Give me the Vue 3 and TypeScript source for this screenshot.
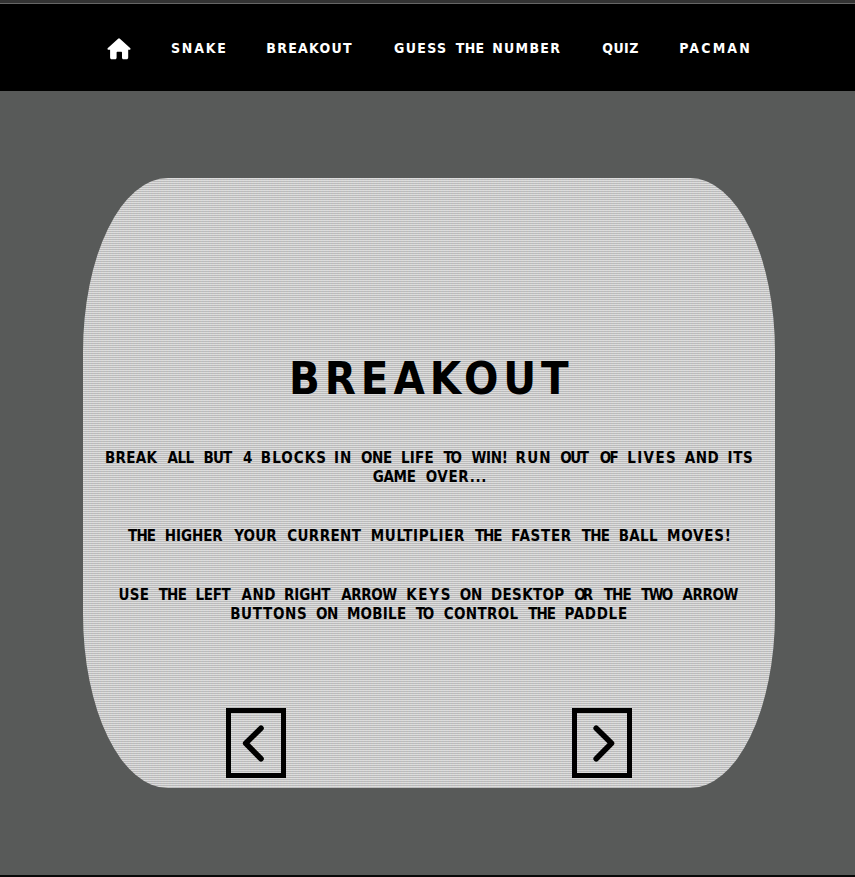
<script setup lang="ts">
interface Word {
  text: string
  width: number
}

const family = '"DejaVu Sans Condensed", "DejaVu Sans", sans-serif'
const ctx = document.createElement('canvas').getContext('2d')!

// Spread the letters of a word evenly over its arcade-font width.
function fit(word: Word, size: number) {
  ctx.font = `bold ${size}px ${family}`
  const m = ctx.measureText(word.text)
  const ink = m.actualBoundingBoxLeft + m.actualBoundingBoxRight
  const gaps = word.text.length - 1
  return {
    width: `${word.width}px`,
    textIndent: `${m.actualBoundingBoxLeft}px`,
    letterSpacing: gaps ? `${((word.width - ink) / gaps).toFixed(3)}px` : '0',
  }
}

function words(source: string): Word[] {
  return source.split(' ').map((part) => {
    const [text, width] = part.split('|')
    return { text, width: Number(width) / 3 }
  })
}

const links: Word[][] = [
  words('SNAKE|163'),
  words('BREAKOUT|254'),
  words('GUESS|156 THE|83 NUMBER|201'),
  words('QUIZ|108'),
  words('PACMAN|207'),
]

const title: Word = { text: 'BREAKOUT', width: 277 }

const paragraphs: Word[][][] = [
  [
    words('BREAK|155 ALL|81 BUT|86 4|27 BLOCKS|190 IN|48 ONE|93 LIFE|95 TO|54 WIN!|106 RUN|101 OUT|89 OF|56 LIVES|140 AND|101 ITS|71'),
    words('GAME|129 OVER...|179'),
  ],
  [words('THE|83 HIGHER|173 YOUR|132 CURRENT|224 MULTIPLIER|280 THE|82 FASTER|179 THE|84 BALL|115 MOVES!|186')],
  [
    words('USE|88 THE|84 LEFT|105 AND|101 RIGHT|139 ARROW|168 KEYS|128 ON|67 DESKTOP|217 OR|59 THE|83 TWO|94 ARROW|168'),
    words('BUTTONS|225 ON|66 MOBILE|174 TO|54 CONTROL|224 THE|82 PADDLE|184'),
  ],
]
</script>

<template>
  <div class="page">
    <nav class="nav">
      <a class="home" aria-label="Home">
        <svg viewBox="0 0 24 22" width="24" height="22">
          <path d="M11.1.7a1.2 1.2 0 0 1 1.8 0l10.2 9.2c.9.8.4 1.9-.7 1.9h-1.2v7.6c0 1.1-.7 1.8-1.7 1.8h-3c-.9 0-1.5-.6-1.5-1.5v-4.9c0-.6-.4-1-1-1h-3.4c-.6 0-1 .4-1 1v4.9c0 .9-.6 1.5-1.5 1.5H4.8c-1 0-1.7-.7-1.7-1.8v-7.6H1.6c-1.1 0-1.6-1.1-.7-1.9z" />
        </svg>
      </a>
      <a v-for="(link, i) in links" :key="i" class="link">
        <template v-for="(w, j) in link" :key="j"><span class="word" :style="fit(w, 14)">{{ w.text }}</span>{{ ' ' }}</template>
      </a>
    </nav>
    <main class="stage">
      <section class="screen">
        <h1 class="title"><span class="word" :style="fit(title, 45)">{{ title.text }}</span></h1>
        <div class="rules">
          <p v-for="(lines, i) in paragraphs" :key="i" class="rule">
            <span v-for="(line, j) in lines" :key="j" class="line">
              <template v-for="(w, k) in line" :key="k"><span class="word" :style="fit(w, 15)">{{ w.text }}</span>{{ ' ' }}</template>
            </span>
          </p>
        </div>
        <div class="controls">
          <button class="arrow" aria-label="Previous">
            <svg viewBox="0 0 50 60" width="50" height="60"><path d="M30 15.3 14.7 30.3 30 45.7" /></svg>
          </button>
          <button class="arrow" aria-label="Next">
            <svg viewBox="0 0 50 60" width="50" height="60"><path d="M19.2 15.3 34.5 30.3 19.2 45.7" /></svg>
          </button>
        </div>
      </section>
    </main>
  </div>
</template>

<style>
body {
  background: #585a59;
}
</style>

<style scoped>
.page {
  box-sizing: border-box;
  height: 877px;
  border-top: 3px solid #333;
  border-bottom: 2px solid #080808;
  background: #585a59;
  font-family: "DejaVu Sans Condensed", "DejaVu Sans", sans-serif;
  font-weight: bold;
  overflow: hidden;
}
.nav {
  box-sizing: border-box;
  height: 88px;
  border-top: 1px solid #666;
  background: #000;
  color: #fff;
  display: flex;
  align-items: center;
  gap: 42px;
  padding-left: 107px;
  font-size: 14px;
  line-height: 20px;
  white-space: nowrap;
}
.home {
  display: flex;
  margin: 2px -2px 0 0;
}
.home svg {
  fill: #fff;
}
.link {
  word-spacing: 5.4px;
}
.word {
  display: inline-block;
  white-space: nowrap;
}
.stage {
  padding: 87px 80px 0 83px;
}
.screen {
  box-sizing: border-box;
  height: 610px;
  padding-top: 176px;
  border-radius: 85px / 174px;
  background:
    linear-gradient(90deg, rgba(255, 0, 0, 0.03), rgba(0, 255, 0, 0.01), rgba(0, 0, 255, 0.03)) 0 0 / 3px 100%,
    linear-gradient(#dfdfdf 50%, #bdbdbd 50%) 0 0 / 100% 2px;
  color: #000;
  text-align: center;
}
.title {
  margin: 0;
  padding-left: 3px;
  font-size: 45px;
  line-height: 50px;
}
.title .word {
  text-align: left;
}
.rules {
  padding-top: 45px;
  font-size: 15px;
  line-height: 19px;
}
.rule {
  margin: 0 0 40px;
}
.line {
  display: block;
  height: 19px;
  white-space: nowrap;
  word-spacing: 5.2px;
}
.line .word {
  text-align: left;
}
.controls {
  display: flex;
  justify-content: space-around;
  padding-top: 44px;
}
.arrow {
  box-sizing: border-box;
  width: 60px;
  height: 70px;
  padding: 0;
  border: 5px solid #000;
  background: transparent;
}
.arrow svg {
  display: block;
  fill: none;
  stroke: #000;
  stroke-width: 5.6;
  stroke-linecap: round;
  stroke-linejoin: round;
}
</style>
